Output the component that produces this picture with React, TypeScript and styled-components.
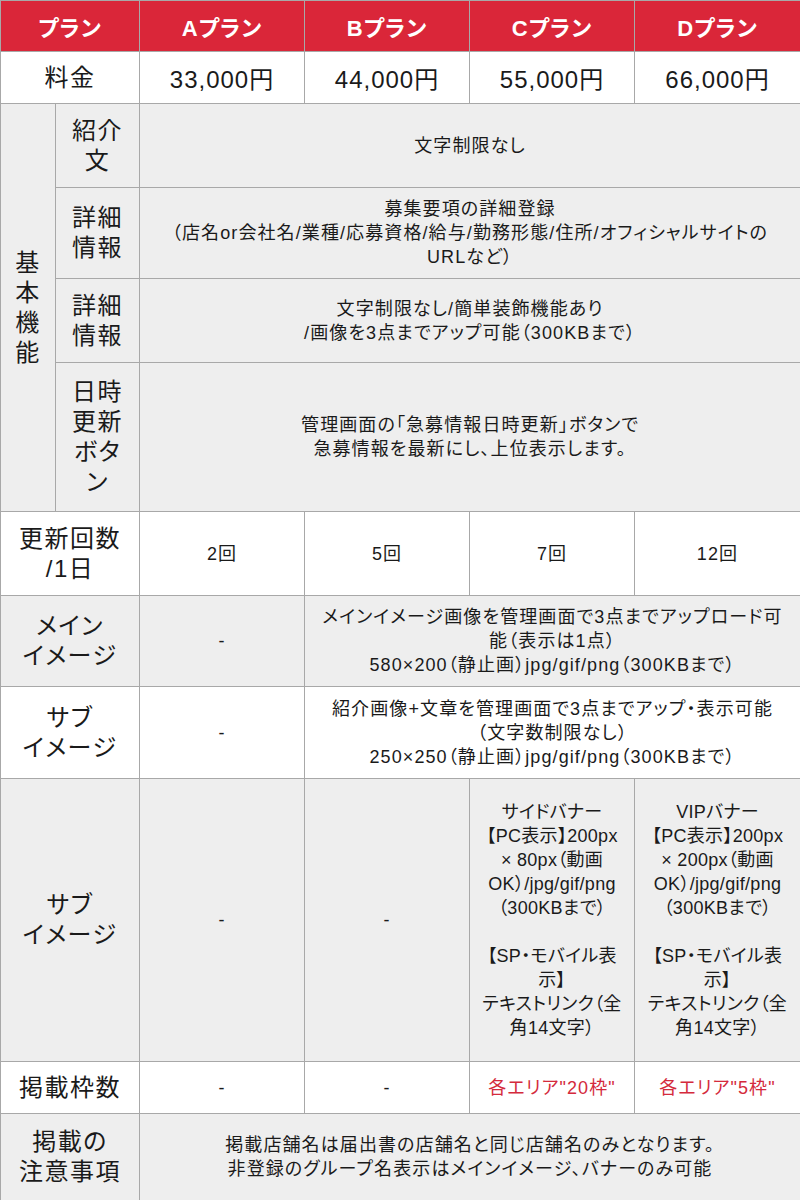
import React from "react";
import styled, { createGlobalStyle } from "styled-components";

const GlobalStyle = createGlobalStyle`
  html, body {
    margin: 0;
    padding: 0;
    background: #fff;
  }
  body {
    font-family: "Liberation Sans", "Noto Sans CJK JP", sans-serif;
    font-feature-settings: "palt";
    color: #1a1a1a;
  }
`;

const Table = styled.table`
  width: 800px;
  table-layout: fixed;
  border-collapse: collapse;
`;

const HeadCell = styled.th`
  background: #da2639;
  color: #fff;
  font-size: 22px;
  font-weight: bold;
  letter-spacing: 1px;
  text-align: center;
  vertical-align: middle;
  border: 1px solid #a8a8a8;
  padding: 0;
`;

const Row = styled.tr<{ $h: number; $gray?: boolean }>`
  height: ${(p) => p.$h}px;
  background: ${(p) => (p.$gray ? "#eeeeee" : "#ffffff")};
`;

const Label = styled.td`
  font-size: 24px;
  line-height: 30px;
  letter-spacing: 1.5px;
  text-align: center;
  vertical-align: middle;
  border: 1px solid #a8a8a8;
  padding: 0 2px;
`;

const Price = styled.td`
  font-size: 24px;
  letter-spacing: 1px;
  text-align: center;
  vertical-align: middle;
  border: 1px solid #a8a8a8;
  padding: 0;
`;

const Cell = styled.td<{ $red?: boolean; $tight?: boolean }>`
  font-size: 18px;
  line-height: 24px;
  letter-spacing: ${(p) => (p.$tight ? "0.3px" : "1.1px")};
  text-align: center;
  vertical-align: middle;
  border: 1px solid #a8a8a8;
  padding: 0 4px;
  white-space: ${(p) => (p.$tight ? "nowrap" : "normal")};
  color: ${(p) => (p.$red ? "#d42a3c" : "inherit")};
`;

const plans = ["Aプラン", "Bプラン", "Cプラン", "Dプラン"];
const prices = ["33,000円", "44,000円", "55,000円", "66,000円"];
const updates = ["2回", "5回", "7回", "12回"];

const Banner = ({ name, size }: { name: string; size: string }) => (
  <>
    {name}
    <br />
    【PC表示】200px
    <br />
    {size}（動画
    <br />
    OK）/jpg/gif/png
    <br />
    （300KBまで）
    <br />
    <br />
    【SP・モバイル表
    <br />
    示】
    <br />
    テキストリンク（全
    <br />
    角14文字）
  </>
);

const App = () => {
  return (
    <>
      <GlobalStyle />
      <Table>
        <colgroup>
          <col style={{ width: 55 }} />
          <col style={{ width: 84 }} />
          <col style={{ width: 165 }} />
          <col style={{ width: 165 }} />
          <col style={{ width: 165 }} />
          <col style={{ width: 166 }} />
        </colgroup>
        <tbody>
          <Row $h={51}>
            <HeadCell colSpan={2}>プラン</HeadCell>
            {plans.map((p) => (
              <HeadCell key={p}>{p}</HeadCell>
            ))}
          </Row>
          <Row $h={52}>
            <Label colSpan={2}>料金</Label>
            {prices.map((p) => (
              <Price key={p}>{p}</Price>
            ))}
          </Row>
          <Row $h={84} $gray>
            <Label rowSpan={4}>
              基<br />本<br />機<br />能
            </Label>
            <Label>
              紹介<br />文
            </Label>
            <Cell colSpan={4}>文字制限なし</Cell>
          </Row>
          <Row $h={91} $gray>
            <Label>
              詳細<br />情報
            </Label>
            <Cell colSpan={4}>
              募集要項の詳細登録
              <br />
              （店名or会社名/業種/応募資格/給与/勤務形態/住所/オフィシャルサイトの
              <br />
              URLなど）
            </Cell>
          </Row>
          <Row $h={84} $gray>
            <Label>
              詳細<br />情報
            </Label>
            <Cell colSpan={4}>
              文字制限なし/簡単装飾機能あり
              <br />
              /画像を3点までアップ可能（300KBまで）
            </Cell>
          </Row>
          <Row $h={149} $gray>
            <Label>
              日時<br />更新<br />ボタ<br />ン
            </Label>
            <Cell colSpan={4}>
              管理画面の「急募情報日時更新」ボタンで
              <br />
              急募情報を最新にし、上位表示します。
            </Cell>
          </Row>
          <Row $h={84}>
            <Label colSpan={2}>
              更新回数
              <br />
              /1日
            </Label>
            {updates.map((u) => (
              <Cell key={u}>{u}</Cell>
            ))}
          </Row>
          <Row $h={91} $gray>
            <Label colSpan={2}>
              メイン
              <br />
              イメージ
            </Label>
            <Cell>-</Cell>
            <Cell colSpan={3}>
              メインイメージ画像を管理画面で3点までアップロード可
              <br />
              能（表示は1点）
              <br />
              580×200（静止画）jpg/gif/png（300KBまで）
            </Cell>
          </Row>
          <Row $h={92}>
            <Label colSpan={2}>
              サブ
              <br />
              イメージ
            </Label>
            <Cell>-</Cell>
            <Cell colSpan={3}>
              紹介画像+文章を管理画面で3点までアップ・表示可能
              <br />
              （文字数制限なし）
              <br />
              250×250（静止画）jpg/gif/png（300KBまで）
            </Cell>
          </Row>
          <Row $h={283} $gray>
            <Label colSpan={2}>
              サブ
              <br />
              イメージ
            </Label>
            <Cell>-</Cell>
            <Cell>-</Cell>
            <Cell $tight>
              <Banner name="サイドバナー" size="× 80px" />
            </Cell>
            <Cell $tight>
              <Banner name="VIPバナー" size="× 200px" />
            </Cell>
          </Row>
          <Row $h={52}>
            <Label colSpan={2}>掲載枠数</Label>
            <Cell>-</Cell>
            <Cell>-</Cell>
            <Cell $red>各エリア"20枠"</Cell>
            <Cell $red>各エリア"5枠"</Cell>
          </Row>
          <Row $h={87} $gray>
            <Label colSpan={2}>
              掲載の
              <br />
              注意事項
            </Label>
            <Cell colSpan={4}>
              掲載店舗名は届出書の店舗名と同じ店舗名のみとなります。
              <br />
              非登録のグループ名表示はメインイメージ、バナーのみ可能
            </Cell>
          </Row>
        </tbody>
      </Table>
    </>
  );
};

export default App;
